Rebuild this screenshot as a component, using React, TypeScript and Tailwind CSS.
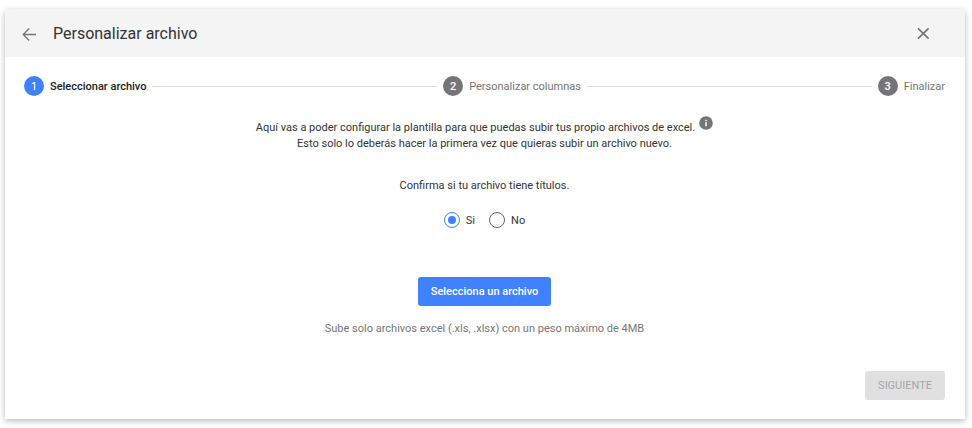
import { Fragment, useRef, useState } from "react";

const steps = ["Seleccionar archivo", "Personalizar columnas", "Finalizar"];

const titleOptions = [
  { value: "si", label: "Si" },
  { value: "no", label: "No" },
];

function ArrowBackIcon() {
  return (
    <svg className="size-4" viewBox="0 0 16 16" fill="none" stroke="currentColor" strokeWidth="1.3">
      <path d="M15 8.5H2.2M8.2 2.5l-6 6 6 6" />
    </svg>
  );
}

function CloseIcon() {
  return (
    <svg className="size-4" viewBox="0 0 16 16" fill="none" stroke="currentColor" strokeWidth="1.7">
      <path d="M3 2.3l10.6 10.4M13.6 2.3L3 12.7" />
    </svg>
  );
}

function InfoIcon() {
  return (
    <svg className="size-3.5" viewBox="0 0 14 14" fill="none">
      <circle cx="7" cy="7" r="6.8" fill="#757575" />
      <path d="M7 6.2v4" stroke="#fff" strokeWidth="1.5" />
      <path d="M7 3.8v1.4" stroke="#fff" strokeWidth="1.5" />
    </svg>
  );
}

function Stepper({ current }: { current: number }) {
  return (
    <ol className="flex items-center gap-1.5">
      {steps.map((step, index) => (
        <Fragment key={step}>
          {index > 0 && <li aria-hidden="true" className="h-px flex-1 bg-[#dcdcdc]" />}
          <li className="flex items-center gap-1.5">
            <span
              className={`flex size-5 items-center justify-center rounded-full pt-px text-white ${
                index === current ? "bg-[#4081ff]" : "bg-[#757575] font-medium"
              }`}
            >
              {index + 1}
            </span>
            <span
              className={`pt-px ${
                index === current ? "font-medium text-[#212121]" : "text-[#757575]"
              }`}
            >
              {step}
            </span>
          </li>
        </Fragment>
      ))}
    </ol>
  );
}

export default function App() {
  const [hasTitles, setHasTitles] = useState("si");
  const fileInput = useRef<HTMLInputElement>(null);

  return (
    <div className="pt-[9px] pr-[7px] pb-[9px] pl-[5px] font-['Roboto',sans-serif] text-[11px] leading-4 text-[#333]">
      <main className="overflow-hidden rounded-t-sm bg-white shadow-[0_2px_6px_rgba(0,0,0,0.28)]">
        <header className="flex h-12 items-center bg-[#f4f4f4] pt-0.5 pr-[34px] pl-4 text-[#757575]">
          <button type="button" aria-label="Volver">
            <ArrowBackIcon />
          </button>
          <h1 className="ml-4 flex-1 text-base text-[#333]">Personalizar archivo</h1>
          <button type="button" aria-label="Cerrar">
            <CloseIcon />
          </button>
        </header>

        <div className="pt-[19px] pr-5 pb-[19px] pl-[19px]">
          <Stepper current={0} />

          <div className="mt-6 flex flex-col items-center text-center">
            <p className="flex gap-1">
              Aquí vas a poder configurar la plantilla para que puedas subir tus propio archivos de
              excel.
              <span className="-mt-1">
                <InfoIcon />
              </span>
            </p>
            <p>Esto solo lo deberás hacer la primera vez que quieras subir un archivo nuevo.</p>

            <fieldset className="mt-[26px]">
              <legend>Confirma si tu archivo tiene títulos.</legend>
              <div className="mt-[18px] flex justify-center gap-3.5">
                {titleOptions.map((option) => (
                  <label key={option.value} className="flex items-start gap-1.5">
                    <input
                      type="radio"
                      name="titulos"
                      value={option.value}
                      checked={hasTitles === option.value}
                      onChange={() => setHasTitles(option.value)}
                      className="size-4 appearance-none rounded-full border border-[#666] bg-white bg-clip-content p-[3px] checked:border-[#4081ff] checked:bg-[#4081ff]"
                    />
                    <span className="pt-px">{option.label}</span>
                  </label>
                ))}
              </div>
            </fieldset>

            <input ref={fileInput} type="file" accept=".xls,.xlsx" className="hidden" />
            <button
              type="button"
              onClick={() => fileInput.current?.click()}
              className="mt-12 h-[29px] rounded-[3px] bg-[#4081ff] px-[13px] font-medium text-white"
            >
              Selecciona un archivo
            </button>
            <p className="mt-[15px] text-[#757575]">
              Sube solo archivos excel (.xls, .xlsx) con un peso máximo de 4MB
            </p>
          </div>

          <div className="mt-[34px] flex justify-end">
            <button
              type="button"
              disabled
              className="h-[29px] rounded-[3px] bg-[#e0e0e0] px-[13px] text-[#a6a6a6]"
            >
              SIGUIENTE
            </button>
          </div>
        </div>
      </main>
    </div>
  );
}
